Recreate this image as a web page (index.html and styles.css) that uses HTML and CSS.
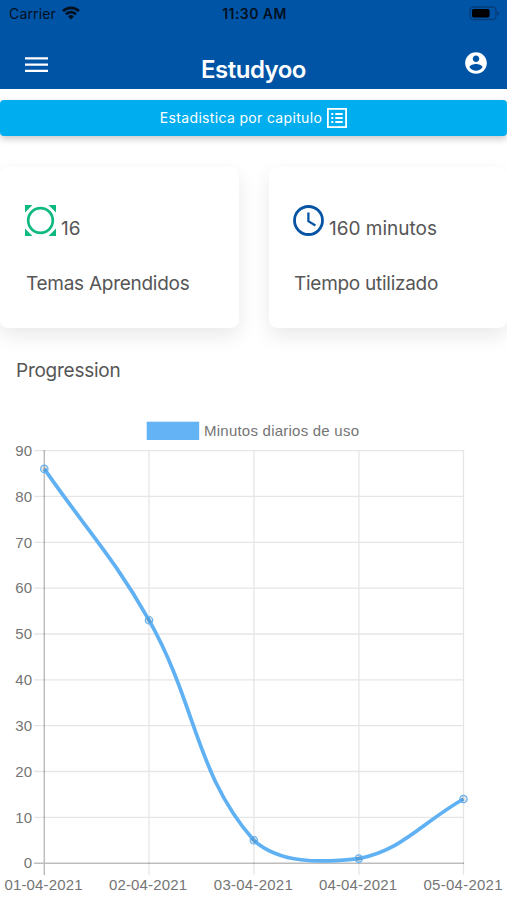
FILE: index.html
```html
<!DOCTYPE html>
<html lang="es">
<head>
<meta charset="utf-8">
<meta name="viewport" content="width=device-width, initial-scale=1">
<title>Estudyoo</title>
<link rel="stylesheet" href="styles.css">
</head>
<body>
<header class="header">
  <div class="status">
    <div class="carrier"><span>Carrier</span>
      <svg width="18" height="14" viewBox="0 0 18 14" fill="none" stroke="#00101f" stroke-width="2.7"><path d="M1 5.1a11.4 11.4 0 0 1 16 0M3.9 8.3a7.2 7.2 0 0 1 10.2 0"/><path d="M9 13.5 6.1 10.5a4.1 4.1 0 0 1 5.8 0Z" fill="#00101f" stroke="none"/></svg>
    </div>
    <div class="time">11:30 AM</div>
    <svg class="battery" width="31" height="15" viewBox="0 0 31 15"><rect x="1" y="1" width="26" height="12.5" rx="3.6" fill="none" stroke="#053d78" stroke-width="1.3"/><rect x="3" y="3" width="17.6" height="8.5" rx="1.8" fill="#000"/><path d="M28.4 5.2q1.7.5 1.7 2.2t-1.7 2.2Z" fill="#053d78"/></svg>
  </div>
  <div class="toolbar">
    <svg class="menu" width="23" height="16" viewBox="0 0 23 16"><path d="M0 1.3h23M0 7.6h23M0 13.9h23" stroke="#fff" stroke-width="2.3"/></svg>
    <h1 class="title">Estudyoo</h1>
    <svg class="account" width="26" height="26" viewBox="0 0 24 24" fill="#fff"><path d="M12 2C6.48 2 2 6.48 2 12s4.48 10 10 10 10-4.48 10-10S17.52 2 12 2zm0 3c1.66 0 3 1.34 3 3s-1.34 3-3 3-3-1.34-3-3 1.34-3 3-3zm0 14.2c-2.5 0-4.71-1.28-6-3.22.03-1.99 4-3.08 6-3.08 1.99 0 5.97 1.09 6 3.08-1.29 1.94-3.5 3.22-6 3.22z"/></svg>
  </div>
</header>
<main>
  <button class="chapter"><span>Estadistica por capitulo</span>
    <svg width="20" height="20" viewBox="0 0 20 20" stroke="#fff" fill="none"><rect x=".9" y=".9" width="18.2" height="18.2" stroke-width="1.8"/><path d="M4.3 5.9h2M4.3 10h2M4.3 14.1h2M8.3 5.9h7.4M8.3 10h7.4M8.3 14.1h7.4" stroke-width="2"/></svg>
  </button>
  <section class="cards">
    <article class="card">
      <div class="metric">
        <svg width="31" height="31" viewBox="0 0 31 31"><path d="M0 0h7.5L0 7.5ZM31 0v7.5L23.5 0ZM0 31v-7.5L7.5 31ZM31 31h-7.5l7.5-7.5Z" fill="#10b981"/><circle cx="15.5" cy="15.5" r="12.3" fill="none" stroke="#10b981" stroke-width="2.7"/></svg>
        <span>16</span>
      </div>
      <p class="label">Temas Aprendidos</p>
    </article>
    <article class="card time-card">
      <div class="metric">
        <svg width="31" height="31" viewBox="0 0 31 31" fill="none" stroke="#0754a5"><circle cx="15.5" cy="15.5" r="14" stroke-width="2.8"/><path d="M15.4 7.5v8.7l7 4.2" stroke-width="2.3"/></svg>
        <span>160 minutos</span>
      </div>
      <p class="label">Tiempo utilizado</p>
    </article>
  </section>
  <h2 class="heading">Progression</h2>
  <svg class="chart" width="507" height="490" viewBox="0 410 507 490">
    <rect x="146.7" y="421.7" width="52.5" height="18.3" fill="#63b3f5"/>
    <text class="tick" x="204" y="436" textLength="155">Minutos diarios de uso</text>
    <path class="grid" d="M34 450.6H464M34 496.4H464M34 542.3H464M34 588.1H464M34 634H464M34 679.8H464M34 725.6H464M34 771.5H464M34 817.3H464M149 450V875M253.9 450V875M358.9 450V875M463.5 450V875"/>
    <path class="axis" d="M34 863.2H464M44.3 450V875"/>
    <g class="tick num">
      <text x="32" y="455.8">90</text><text x="32" y="501.6">80</text><text x="32" y="547.5">70</text><text x="32" y="593.3">60</text><text x="32" y="639.2">50</text><text x="32" y="685">40</text><text x="32" y="730.8">30</text><text x="32" y="776.7">20</text><text x="32" y="822.5">10</text><text x="32" y="868.4">0</text>
    </g>
    <g class="tick">
      <text x="4.5" y="889.5" textLength="78">01-04-2021</text><text x="109" y="889.5" textLength="78">02-04-2021</text><text x="213.8" y="889.5" textLength="79">03-04-2021</text><text x="319" y="889.5" textLength="78">04-04-2021</text><text x="423.5" y="889.5" textLength="79">05-04-2021</text>
    </g>
    <path d="M44.3 468.9C86.2 529.4 113 556.3 149 620.2C196.8 704.9 195.4 774 253.8 840.3C279.3 863.2 319.4 863.2 358.8 858.6C403.3 849.8 421.6 822.8 463.5 799" fill="none" stroke="#60b1f3" stroke-width="3.7"/>
    <g class="points"><circle cx="44.3" cy="468.9" r="3.7"/><circle cx="149" cy="620.2" r="3.7"/><circle cx="253.8" cy="840.3" r="3.7"/><circle cx="358.8" cy="858.6" r="3.7"/><circle cx="463.5" cy="799" r="3.7"/></g>
  </svg>
</main>
</body>
</html>
```
FILE: styles.css
```css
* { box-sizing: border-box; }
body { margin: 0; width: 507px; height: 900px; overflow: hidden; background: #fff; color: #565656; font-family: Inter, "Liberation Sans", sans-serif; }
.header { height: 89px; background: #0054a6; }
.status { height: 28px; padding: 0 7px 0 9px; display: grid; grid-template-columns: 1fr auto 1fr; align-items: center; color: #00101f; font-size: 14px; line-height: 28px; }
.carrier { display: flex; align-items: center; gap: 6px; letter-spacing: .15px; }
.carrier svg { margin-bottom: 3px; }
.time { font-weight: 600; letter-spacing: .45px; }
.battery { justify-self: end; margin-bottom: 2px; }
.toolbar { height: 61px; padding: 0 25px; display: grid; grid-template-columns: 1fr auto 1fr; align-items: center; }
.menu { margin-top: 12px; }
.title { margin: 22px 0 0; color: #fff; font-size: 24px; line-height: 30px; font-weight: 600; letter-spacing: -.5px; }
.account { justify-self: end; margin: 8px -7px 0 0; }
.chapter { width: 507px; height: 36px; margin: 11px 0 0; padding: 0; border: 0; border-radius: 4px; background: #00adef; color: #fff; font: 14px/20px Inter, sans-serif; letter-spacing: .33px; display: flex; align-items: center; justify-content: center; gap: 5px; box-shadow: 0 3px 7px rgba(0,0,0,.22); }
.cards { margin-top: 31px; display: grid; grid-template-columns: 239px 238px; gap: 30px; }
.card { height: 161px; border-radius: 8px; background: #fff; padding: 38px 25px 0; box-shadow: 0 8px 20px rgba(0,0,0,.09); }
.time-card { padding-left: 24px; }
.metric { height: 39px; display: flex; gap: 5px; font-size: 19px; line-height: 24px; }
.metric span { margin-top: 12px; }
.label { margin: 26px 0 0 1px; font-size: 19px; line-height: 27px; letter-spacing: -.27px; white-space: nowrap; }
.heading { margin: 30px 0 0 16px; font-size: 19px; line-height: 26px; font-weight: 400; letter-spacing: -.25px; }
.chart { display: block; margin-top: 26px; }
.tick { fill: #757575; font: 15px "Liberation Sans", sans-serif; }
.num { text-anchor: end; }
.grid { stroke: rgba(0,0,0,.1); stroke-width: 1.3; }
.axis { stroke: rgba(0,0,0,.26); stroke-width: 1.5; }
.points { fill: rgba(0,0,0,.1); stroke: #60b1f3; stroke-width: 1.2; }
```
